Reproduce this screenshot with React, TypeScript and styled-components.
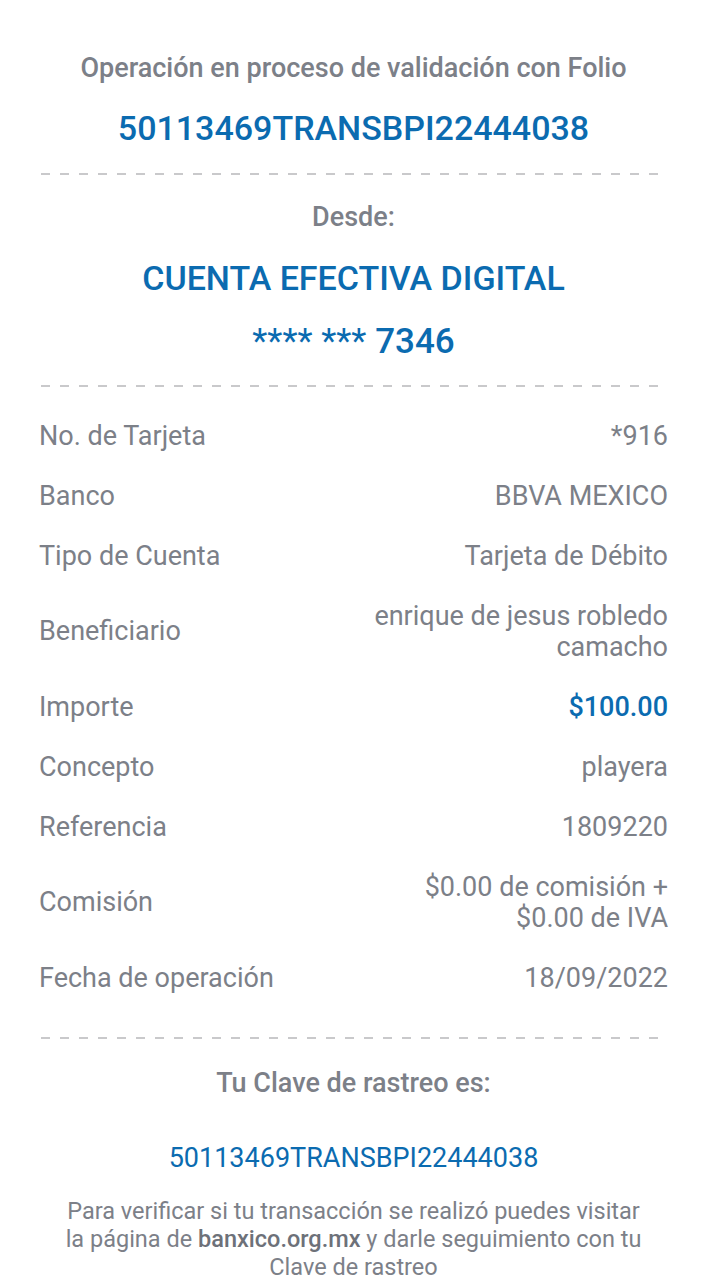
import React from "react";
import styled, { createGlobalStyle } from "styled-components";

const Global = createGlobalStyle`
  html, body { margin: 0; padding: 0; background: #ffffff; }
  body { font-family: Roboto, "Noto Sans", Arial, sans-serif; }
`;

const GRAY = "#7c8088";
const BLUE = "#0b6bb0";

const Page = styled.div`
  width: 707px;
  box-sizing: border-box;
  padding: 50px 39px 0 39px;
  display: flex;
  flex-direction: column;
  align-items: stretch;
`;

const Title = styled.div`
  text-align: center;
  color: ${GRAY};
  font-size: 27px;
  font-weight: 500;
  line-height: 36px;
`;

const Folio = styled.div`
  text-align: center;
  color: ${BLUE};
  font-size: 34px;
  font-weight: 500;
  line-height: 40px;
  margin-top: 22px;
`;

const Divider = styled.div<{ $mt: number; $mb: number }>`
  height: 2px;
  margin: ${(p) => p.$mt}px 2px ${(p) => p.$mb}px 2px;
  background-image: repeating-linear-gradient(
    to right,
    #c9c9cb 0 9px,
    transparent 9px 19px
  );
`;

const Account = styled.div<{ $mt: number; $size: number }>`
  text-align: center;
  color: ${BLUE};
  font-size: ${(p) => p.$size}px;
  font-weight: 500;
  line-height: 40px;
  margin-top: ${(p) => p.$mt}px;
`;

const Stars = styled.span`
  font-weight: 400;
`;

const Rows = styled.div`
  display: flex;
  flex-direction: column;
`;

const Row = styled.div<{ $h: number }>`
  display: flex;
  justify-content: space-between;
  align-items: center;
  min-height: ${(p) => p.$h}px;
`;

const Label = styled.div`
  color: ${GRAY};
  font-size: 27px;
  line-height: 31px;
`;

const Value = styled.div<{ $accent?: boolean }>`
  color: ${(p) => (p.$accent ? BLUE : GRAY)};
  font-weight: ${(p) => (p.$accent ? 500 : 400)};
  font-size: 27px;
  line-height: 31px;
  text-align: right;
  max-width: 300px;
`;

const Footer = styled.div`
  display: flex;
  flex-direction: column;
  align-items: center;
`;

const Track = styled.div`
  color: ${BLUE};
  font-size: 27px;
  font-weight: 400;
  line-height: 34px;
  margin-top: 40px;
`;

const Note = styled.p`
  margin: 22px 0 0 0;
  color: ${GRAY};
  font-size: 23.5px;
  line-height: 28px;
  text-align: center;
  width: 585px;
`;

const Strong = styled.b`
  color: #6d7179;
  font-weight: 500;
`;

const rows: { label: string; value: string; accent?: boolean; tall?: boolean }[] = [
  { label: "No. de Tarjeta", value: "*916" },
  { label: "Banco", value: "BBVA MEXICO" },
  { label: "Tipo de Cuenta", value: "Tarjeta de Débito" },
  { label: "Beneficiario", value: "enrique de jesus robledo camacho", tall: true },
  { label: "Importe", value: "$100.00", accent: true },
  { label: "Concepto", value: "playera" },
  { label: "Referencia", value: "1809220" },
  { label: "Comisión", value: "$0.00 de comisión + $0.00 de IVA", tall: true },
  { label: "Fecha de operación", value: "18/09/2022" },
];

export default function App() {
  return (
    <>
      <Global />
      <Page>
        <Title>Operación en proceso de validación con Folio</Title>
        <Folio>50113469TRANSBPI22444038</Folio>
        <Divider $mt={25} $mb={24} />
        <Title>Desde:</Title>
        <Account $mt={23} $size={34}>CUENTA EFECTIVA DIGITAL</Account>
        <Account $mt={24} $size={35}>
          <Stars>**** ***</Stars> 7346
        </Account>
        <Divider $mt={23} $mb={19} />
        <Rows>
          {rows.map((r) => (
            <Row key={r.label} $h={r.tall ? 91 : 60}>
              <Label>{r.label}</Label>
              <Value $accent={r.accent}>{r.value}</Value>
            </Row>
          ))}
        </Rows>
        <Divider $mt={29} $mb={26} />
        <Footer>
          <Title>Tu Clave de rastreo es:</Title>
          <Track>50113469TRANSBPI22444038</Track>
          <Note>
            Para verificar si tu transacción se realizó puedes visitar la página de{" "}
            <Strong>banxico.org.mx</Strong> y darle seguimiento con tu Clave de rastreo
          </Note>
        </Footer>
      </Page>
    </>
  );
}
